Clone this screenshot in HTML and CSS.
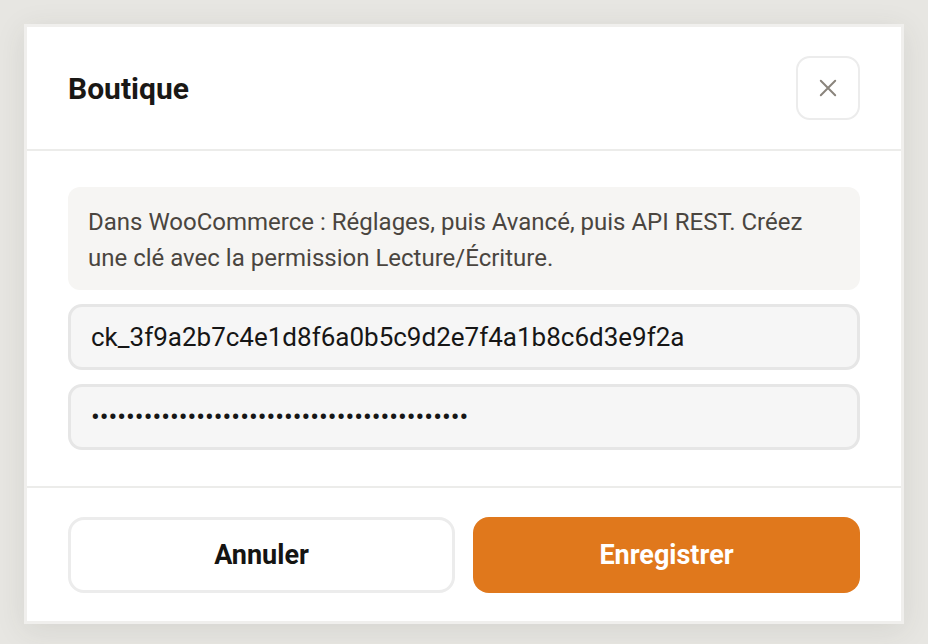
FILE: index.html
```html
<!DOCTYPE html>
<html lang="fr">
<head>
<meta charset="utf-8">
<title>Boutique</title>
<link rel="stylesheet" href="styles.css">
</head>
<body>
<div class="dialog">
  <div class="header">
    <h2 class="title">Boutique</h2>
    <button class="close" aria-label="Fermer">
      <svg width="20" height="20" viewBox="0 0 20 20"><path d="M2 2 L18 18 M18 2 L2 18" stroke="#8a847c" stroke-width="2.2" stroke-linecap="round" fill="none"/></svg>
    </button>
  </div>
  <div class="body">
    <p class="info">Dans WooCommerce : Réglages, puis Avancé, puis API REST. Créez une clé avec la permission Lecture/Écriture.</p>
    <input class="field" type="text" value="ck_3f9a2b7c4e1d8f6a0b5c9d2e7f4a1b8c6d3e9f2a">
    <input class="field" type="password" value="cs_1234567890abcdef1234567890abcdef12345678">
  </div>
  <div class="footer">
    <button class="btn btn-cancel">Annuler</button>
    <button class="btn btn-save">Enregistrer</button>
  </div>
</div>
</body>
</html>
```
FILE: styles.css
```css
* { box-sizing: border-box; }
html, body { margin: 0; height: 100%; }
body {
  background: #e7e6e2;
  padding: 24px;
  font-family: Roboto, "Liberation Sans", sans-serif;
}
.dialog {
  width: 880px;
  background: #fff;
  border: 3px solid #f0efed;
  box-shadow: 0 6px 28px rgba(60, 55, 45, 0.10);
}
.header {
  display: flex;
  align-items: center;
  justify-content: space-between;
  padding: 29px 41px 29px 41px;
  border-bottom: 2px solid #ececea;
}
.title {
  margin: 0;
  font-size: 30px;
  font-weight: 700;
  color: #1a1815;
}
.close {
  width: 64px;
  height: 64px;
  border: 2px solid #ececec;
  border-radius: 14px;
  background: #fff;
  display: flex;
  align-items: center;
  justify-content: center;
  padding: 0;
}
.close svg { width: 18px; height: 18px; }
.body {
  display: flex;
  flex-direction: column;
  gap: 14px;
  padding: 36px 41px 36px 41px;
  border-bottom: 2px solid #ececea;
}
.info {
  margin: 0;
  background: #f6f5f3;
  border-radius: 12px;
  padding: 17px 20px 14px 20px;
  font-size: 24px;
  line-height: 36px;
  color: #4a453f;
}
.field {
  height: 66px;
  width: 100%;
  background: #f6f6f6;
  border: 3px solid #e6e6e6;
  border-radius: 14px;
  padding: 0 20px;
  font-family: Roboto, "Liberation Sans", sans-serif;
  font-size: 26px;
  color: #161616;
  outline: none;
}
.footer {
  display: grid;
  grid-template-columns: 1fr 1fr;
  gap: 18px;
  padding: 29px 41px 28px 41px;
}
.btn {
  height: 76px;
  border-radius: 16px;
  font-family: Roboto, "Liberation Sans", sans-serif;
  font-size: 27px;
  font-weight: 700;
  cursor: pointer;
}
.btn-cancel {
  background: #fff;
  border: 3px solid #ececec;
  color: #151412;
}
.btn-save {
  background: #e0781c;
  border: none;
  color: #fff;
}
```
